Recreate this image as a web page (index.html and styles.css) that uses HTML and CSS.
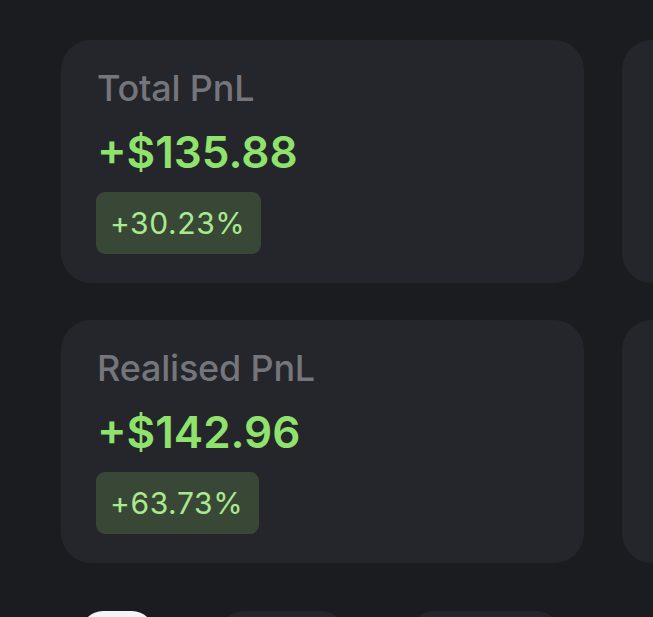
FILE: index.html
```html
<!DOCTYPE html>
<html lang="en">
<head>
    <meta charset="UTF-8"/>
    <meta name="viewport" content="width=device-width, initial-scale=1.0"/>
    <title>PnL</title>
    <link rel="stylesheet" href="styles.css">
</head>
<body>
<div class="stats">
    <div class="card">
        <p class="label">Total PnL</p>
        <p class="value">+$135.88</p>
        <span class="badge">+30.23%</span>
    </div>
    <div class="card"></div>
    <div class="card">
        <p class="label">Realised PnL</p>
        <p class="value">+$142.96</p>
        <span class="badge">+63.73%</span>
    </div>
    <div class="card"></div>
</div>
<div class="tabs">
    <span class="tab active"></span>
    <span class="tab wide"></span>
    <span class="tab wider"></span>
</div>
</body>
</html>
```

FILE: styles.css
```css
* {
    margin: 0;
    padding: 0;
    box-sizing: border-box;
}

body {
    width: 653px;
    height: 617px;
    overflow: hidden;
    background-color: #1b1c20;
    font-family: 'Inter', 'Noto Sans', sans-serif;
}

.stats {
    display: grid;
    grid-template-columns: 523px 523px;
    grid-auto-rows: 243px;
    gap: 37px 38px;
    padding: 40px 0 0 61px;
}

.card {
    background-color: #25262b;
    border-radius: 30px;
    padding: 26px 36px 0;
    display: flex;
    flex-direction: column;
    align-items: flex-start;
}

.label {
    font-size: 36px;
    line-height: 44px;
    font-weight: 500;
    color: #75757c;
    letter-spacing: -0.2px;
}

.value {
    margin-top: 16px;
    font-size: 44px;
    line-height: 52px;
    font-weight: 600;
    color: #8fe36c;
}

.badge {
    margin-top: 14px;
    margin-left: -1px;
    padding: 13px 16px 13px 14px;
    font-size: 30px;
    line-height: 36px;
    letter-spacing: 0.6px;
    color: #a9ea8f;
    background-color: #394736;
    border-radius: 9px;
}

.tabs {
    display: flex;
    gap: 67px;
    padding: 48px 0 0 81px;
}

.tab {
    height: 44px;
    width: 123px;
    border-radius: 22px;
    background-color: #25262b;
}

.tab.active {
    width: 73px;
    background-color: #f4f4f6;
}

.tab.wider {
    width: 148px;
}
```
